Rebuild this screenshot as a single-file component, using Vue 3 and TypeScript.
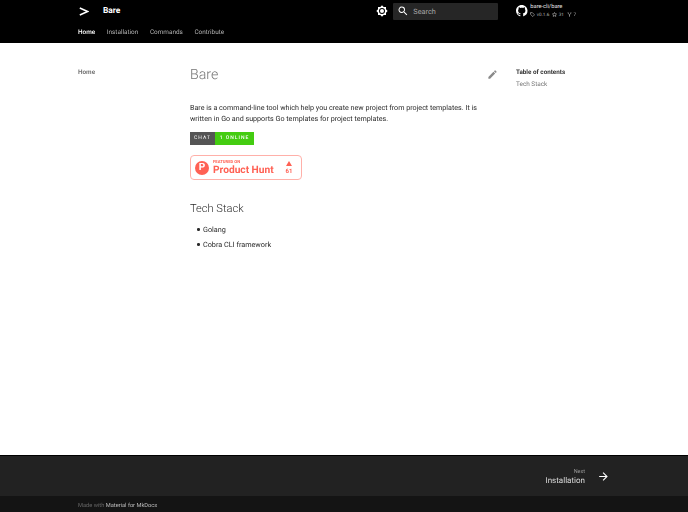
<script setup lang="ts">
const tabs: string[] = ['Home', 'Installation', 'Commands', 'Contribute']
</script>

<template>
  <div class="page">
    <header class="header">
      <div class="bar">
        <svg class="logo" viewBox="0 0 10 9" width="10" height="9"><path d="M.8 1 L8.600 4.500 L.8 8" fill="none" stroke="#fff" stroke-width="1.500"/></svg>
        <span class="title">Bare</span>
        <svg class="theme" viewBox="0 0 24 24" width="12" height="12"><path fill="#fff" d="M12 8a4 4 0 1 0 0 8 4 4 0 0 0 0-8zm0 10a6 6 0 1 1 0-12 6 6 0 0 1 0 12zm8-9.31V4h-4.69L12 .69 8.69 4H4v4.69L.69 12 4 15.31V20h4.69L12 23.31 15.31 20H20v-4.69L23.31 12 20 8.69z"/></svg>
        <div class="search">
          <svg viewBox="0 0 24 24" width="12" height="12"><path fill="#fff" d="M9.5 3A6.5 6.5 0 0 1 16 9.5c0 1.61-.59 3.09-1.56 4.23l.27.27h.79l5 5-1.5 1.5-5-5v-.79l-.27-.27A6.5 6.5 0 1 1 9.5 3m0 2C7 5 5 7 5 9.5S7 14 9.5 14 14 12 14 9.5 12 5 9.5 5z"/></svg>
          <span>Search</span>
        </div>
        <div class="repo">
          <svg viewBox="0 0 16 16" width="11.500" height="11.500"><path fill="#fff" d="M8 0C3.58 0 0 3.58 0 8c0 3.54 2.29 6.53 5.47 7.59.4.07.55-.17.55-.38 0-.19-.01-.82-.01-1.49-2.01.37-2.53-.49-2.69-.94-.09-.23-.48-.94-.82-1.13-.28-.15-.68-.52-.01-.53.63-.01 1.08.58 1.23.82.72 1.21 1.87.87 2.33.66.07-.52.28-.87.51-1.07-1.78-.2-3.64-.89-3.64-3.95 0-.87.31-1.59.82-2.15-.08-.2-.36-1.02.08-2.12 0 0 .67-.21 2.2.82.64-.18 1.32-.27 2-.27s1.36.09 2 .27c1.53-1.04 2.2-.82 2.2-.82.44 1.1.16 1.92.08 2.12.51.56.82 1.27.82 2.15 0 3.07-1.87 3.75-3.65 3.95.29.25.54.73.54 1.48 0 1.07-.01 1.93-.01 2.2 0 .21.15.46.55.38A8.01 8.01 0 0 0 16 8c0-4.42-3.58-8-8-8z"/></svg>
          <div class="repo-text">
            <div class="repo-name">bare-cli/bare</div>
            <div class="repo-facts">
              <span class="fact"><svg viewBox="0 0 16 16" width="5" height="5"><path fill="none" stroke="#ccc" stroke-width="1.800" d="M1.5 2h6l7 7-5.5 5.5-7.5-7z"/></svg><i>v0.1.6</i></span>
              <span class="fact"><svg viewBox="0 0 16 16" width="5" height="5"><path fill="none" stroke="#ccc" stroke-width="1.800" d="M8 1.5l2 4.3 4.6.6-3.4 3.2.9 4.6L8 11.9l-4.1 2.3.9-4.6L1.400 6.400 6 5.800z"/></svg><i>31</i></span>
              <span class="fact"><svg viewBox="0 0 16 16" width="5" height="5"><path fill="none" stroke="#ccc" stroke-width="2" d="M3.500 1v3.500L8 8.500l4.500-4V1M8 8.500V15"/></svg><i>7</i></span>
            </div>
          </div>
        </div>
      </div>
      <nav class="tabs">
        <a v-for="(t, i) in tabs" :key="t" :class="{ active: i === 0 }">{{ t }}</a>
      </nav>
    </header>

    <main class="main">
      <aside class="nav"><span>Home</span></aside>
      <article class="content">
        <div class="h1-row">
          <h1>Bare</h1>
          <svg class="edit" viewBox="0 0 24 24" width="11" height="11"><path fill="#8a8a8a" d="M20.71 7.040c.39-.39.39-1.040 0-1.410l-2.340-2.340c-.37-.39-1.020-.39-1.410 0l-1.840 1.830 3.750 3.750M3 17.250V21h3.750L17.810 9.930l-3.750-3.750L3 17.250z"/></svg>
        </div>
        <p class="intro">Bare is a command-line tool which help you create new project from project templates. It is written in Go and supports Go templates for project templates.</p>
        <div class="chat"><span class="chat-l">CHAT</span><span class="chat-r">1 ONLINE</span></div>
        <div class="ph">
          <span class="ph-logo">P</span>
          <div class="ph-text">
            <div class="ph-small">FEATURED ON</div>
            <div class="ph-big">Product Hunt</div>
          </div>
          <div class="ph-votes">
            <svg viewBox="0 0 10 8" width="6" height="5"><path d="M5 0l5 8H0z" fill="#ff6154"/></svg>
            <span>61</span>
          </div>
        </div>
        <h2>Tech Stack</h2>
        <ul>
          <li>Golang</li>
          <li>Cobra CLI framework</li>
        </ul>
      </article>
      <aside class="toc">
        <div class="toc-title">Table of contents</div>
        <div class="toc-item">Tech Stack</div>
      </aside>
    </main>

    <footer class="footer">
      <div class="next-wrap">
        <div class="next">
          <div class="next-label">Next</div>
          <div class="next-title">Installation</div>
        </div>
        <svg viewBox="0 0 24 24" width="13" height="13"><path fill="#fff" d="M4 11v2h12l-5.500 5.500 1.420 1.420L19.840 12l-7.920-7.920L10.500 5.500 16 11H4z"/></svg>
      </div>
      <div class="meta">Made with <span>Material for MkDocs</span></div>
    </footer>
  </div>
</template>

<style>
html, body { margin: 0; background: #fff; }
</style>

<style scoped>
.page { width: 688px; height: 512px; display: flex; flex-direction: column; font-family: Roboto, sans-serif; overflow: hidden; text-rendering: geometricPrecision; filter: blur(0.35px); }
.header { background: #000; color: #fff; height: 43px; flex: none; }
.bar { height: 22px; display: flex; align-items: center; padding-left: 79px; }
.logo { flex: none; }
.title { margin-left: 14px; font-size: 8.400px; font-weight: 700; }
.theme { margin-left: 256px; }
.search { margin-left: 5px; width: 105px; height: 17px; box-sizing: border-box; background: #262626; border-radius: 1px; display: flex; align-items: center; padding-left: 4px; gap: 4px; font-size: 7.300px; color: #a8a8a8; }
.repo { margin-left: 18px; display: flex; align-items: center; gap: 2.500px; }
.repo-text { line-height: 7px; }
.repo-name { font-size: 5.700px; color: #e4e4e4; }
.repo-facts { display: flex; gap: 3px; height: 7px; font-size: 4.600px; color: #bbb; }
.fact { display: flex; align-items: center; gap: 1.500px; height: 7px; }
.fact i { font-style: normal; line-height: 7px; display: block; margin-top: 1px; }
.tabs { height: 21px; display: flex; gap: 11.600px; padding-left: 78px; align-items: center; font-size: 6.400px; color: #b3b3b3; padding-bottom: 1px; box-sizing: border-box; }
.tabs .active { color: #fff; font-weight: 500; }
.main { flex: 1; display: flex; padding-left: 78px; }
.nav { width: 112px; flex: none; padding-top: 25px; font-size: 6.400px; font-weight: 700; color: #757575; line-height: 9px; }
.content { width: 308px; flex: none; color: #2a2a2a; }
.h1-row { display: flex; justify-content: space-between; margin-top: 23px; }
h1 { margin: 0; font-size: 14.200px; line-height: 19px; font-weight: 300; color: #757575; }
.edit { margin: 3px 0.500px 0 0; }
.intro { margin: 17px 0 0; font-size: 7.150px; line-height: 11px; }
.chat { display: flex; margin-top: 8px; height: 13px; font-size: 5px; letter-spacing: 1px; line-height: 13px; color: #fff; }
.chat-l { width: 25px; background: #555; text-align: center; }
.chat-r { width: 39px; background: #4c1; text-align: center; font-weight: 500; }
.ph { margin-top: 10px; width: 112px; height: 25px; box-sizing: border-box; border: 1px solid #ffb0a9; border-radius: 4px; display: flex; align-items: center; padding-left: 4px; color: #ff6154; background: #fff; }
.ph-logo { width: 14px; height: 14px; border-radius: 50%; background: #ff6154; color: #fff; font-size: 10px; font-weight: 700; text-align: center; line-height: 14px; flex: none; }
.ph-text { margin-left: 4px; flex: 1; }
.ph-small { font-size: 4.200px; font-weight: 700; line-height: 5px; }
.ph-big { font-size: 10.200px; font-weight: 700; line-height: 11px; }
.ph-votes { width: 24px; display: flex; flex-direction: column; align-items: center; gap: 2px; font-size: 6px; font-weight: 700; line-height: 7px; }
h2 { margin: 21px 0 0; font-size: 11.100px; font-weight: 300; line-height: 15px; color: #2a2a2a; }
ul { margin: 6px 0 0; padding: 0 0 0 7px; font-size: 7.250px; list-style: none; }
li { line-height: 15px; display: flex; align-items: center; gap: 3.500px; }
li::before { content: ""; width: 2.500px; height: 2.500px; border-radius: 50%; background: #2a2a2a; flex: none; }
.toc { margin-left: 18px; padding-top: 25px; font-size: 6.400px; line-height: 9px; }
.toc-title { font-weight: 700; color: #333; font-size: 6.300px; }
.toc-item { margin-top: 3px; color: #757575; }
.footer { flex: none; color: #fff; }
.next-wrap { height: 40px; background: #222; border-top: 1px solid #000; display: flex; justify-content: flex-end; align-items: center; padding-right: 78px; gap: 12px; }
.next { text-align: right; padding-top: 2px; }
.next-label { font-size: 5.500px; color: #999; line-height: 8px; }
.next-title { font-size: 8px; line-height: 10px; color: #ddd; }
.meta { height: 16px; background: #141414; padding-left: 78px; font-size: 5.700px; line-height: 20px; color: #666; }
.meta span { color: #bbb; }
</style>
